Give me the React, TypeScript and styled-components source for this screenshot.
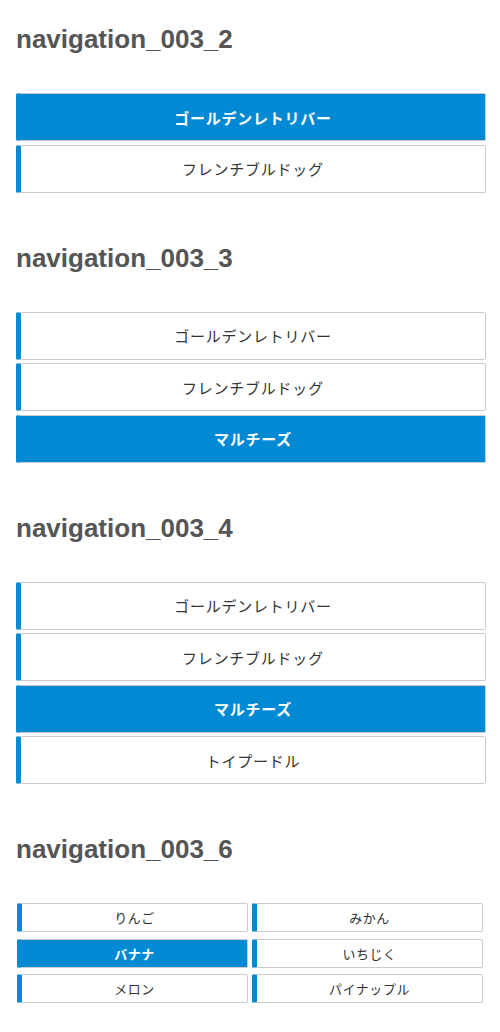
import React from 'react';
import styled, { createGlobalStyle } from 'styled-components';

const BLUE = '#0289d3';

const GlobalStyle = createGlobalStyle`
  html, body {
    margin: 0;
    padding: 0;
    background: #fff;
  }
  body {
    font-family: "Liberation Sans", "Noto Sans CJK JP", sans-serif;
  }
`;

const Page = styled.div`
  display: flex;
  flex-direction: column;
  padding-top: 21px;
`;

const Section = styled.section`
  display: flex;
  flex-direction: column;
  margin-bottom: 47px;
`;

const Heading = styled.h2`
  margin: 0 0 36px;
  padding-left: 16px;
  font-size: 26px;
  line-height: 36px;
  font-weight: bold;
  color: #555;
`;

const List = styled.ul`
  list-style: none;
  margin: 0 14px 0 16px;
  padding: 0;
  display: flex;
  flex-direction: column;
  gap: 3.5px;
`;

const Item = styled.li<{ $active?: boolean }>`
  height: 48px;
  box-sizing: border-box;
  display: flex;
  align-items: center;
  justify-content: center;
  border: 1px solid #ccc;
  border-left: 5px solid ${BLUE};
  border-radius: 2px;
  background: ${(p) => (p.$active ? BLUE : '#fff')};
  color: ${(p) => (p.$active ? '#fff' : '#333')};
  font-family: "Noto Sans CJK JP", sans-serif;
  font-size: 15px;
  font-weight: ${(p) => (p.$active ? 'bold' : 'normal')};
  letter-spacing: 0.05em;
  cursor: pointer;
`;

const Grid = styled.ul`
  list-style: none;
  margin: 0 17px;
  padding: 0;
  display: grid;
  grid-template-columns: 1fr 1fr;
  column-gap: 4px;
  row-gap: 6.5px;
`;

const Cell = styled.li<{ $active?: boolean }>`
  height: 29px;
  box-sizing: border-box;
  display: flex;
  align-items: center;
  justify-content: center;
  border: 1px solid #ccc;
  border-left: 5px solid ${BLUE};
  border-radius: 2px;
  background: ${(p) => (p.$active ? BLUE : '#fff')};
  color: ${(p) => (p.$active ? '#fff' : '#333')};
  font-family: "Noto Sans CJK JP", sans-serif;
  font-size: 13px;
  font-weight: ${(p) => (p.$active ? 'bold' : 'normal')};
  letter-spacing: 0.04em;
  cursor: pointer;
`;

const dogs = ['ゴールデンレトリバー', 'フレンチブルドッグ', 'マルチーズ', 'トイプードル'];
const fruits = ['りんご', 'みかん', 'バナナ', 'いちじく', 'メロン', 'パイナップル'];

const sections = [
  { title: 'navigation_003_2', count: 2, active: 0 },
  { title: 'navigation_003_3', count: 3, active: 2 },
  { title: 'navigation_003_4', count: 4, active: 2 },
];

const App: React.FC = () => {
  return (
    <>
      <GlobalStyle />
      <Page>
        {sections.map((s) => (
          <Section key={s.title}>
            <Heading>{s.title}</Heading>
            <List>
              {dogs.slice(0, s.count).map((d, i) => (
                <Item key={d} $active={i === s.active}>
                  {d}
                </Item>
              ))}
            </List>
          </Section>
        ))}
        <Section>
          <Heading>navigation_003_6</Heading>
          <Grid>
            {fruits.map((f, i) => (
              <Cell key={f} $active={i === 2}>
                {f}
              </Cell>
            ))}
          </Grid>
        </Section>
      </Page>
    </>
  );
};

export default App;
